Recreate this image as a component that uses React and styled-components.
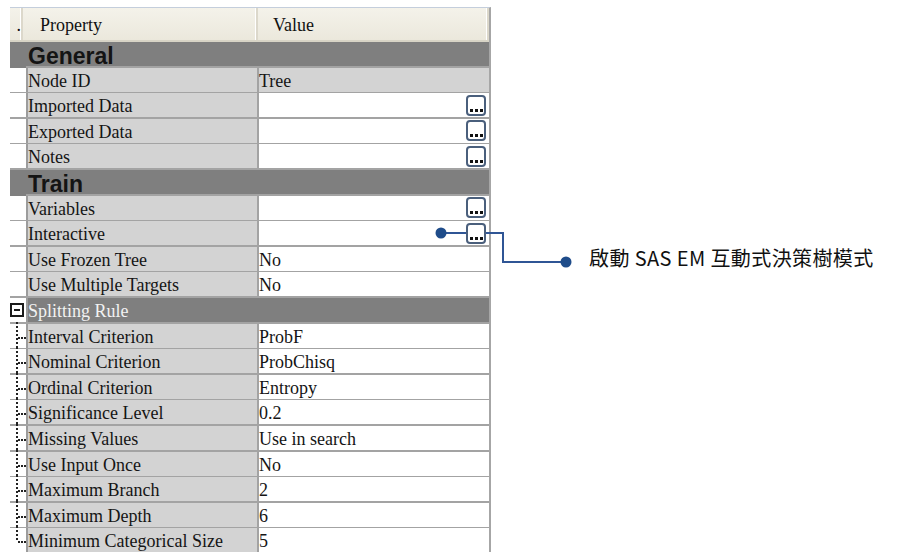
import React from "react";
import styled, { createGlobalStyle } from "styled-components";

const GlobalStyle = createGlobalStyle`
  html, body {
    margin: 0;
    padding: 0;
    background: #ffffff;
  }
  body {
    font-family: "Liberation Serif", "Times New Roman", serif;
  }
`;

const ROW_H = 25.6;

const Page = styled.div`
  position: relative;
  width: 900px;
  height: 552px;
  overflow: hidden;
  padding: 7px 0 0 10px;
  box-sizing: border-box;
`;

const Sheet = styled.div`
  width: 479px;
  border-top: 1px solid #c4cedc;
  border-right: 2px solid #a6a6a6;
`;

const HeaderRow = styled.div`
  display: grid;
  grid-template-columns: 13px 235px 1fr;
  height: 34px;
  background: linear-gradient(#f4f2ea, #ebe8dc);
  border-bottom: 2px solid #d8d4c6;
  box-sizing: border-box;
`;

const HeaderCell = styled.div`
  display: flex;
  align-items: center;
  justify-content: ${(p) => (p.$end ? "flex-end" : "flex-start")};
  padding-left: ${(p) => p.$pad || 0}px;
  padding-top: 2px;
  font-size: 18px;
  color: #111;
  border-right: 2px solid #dcd8cb;
  box-shadow: inset -1px 0 0 #ffffff;
  box-sizing: border-box;
`;

const Row = styled.div`
  display: grid;
  grid-template-columns: 16px 231px 1fr;
  height: ${ROW_H}px;
  box-sizing: border-box;
  border-bottom: 2px solid #a3a3a3;
  background: ${(p) => (p.$group ? "#7f7f7f" : "transparent")};
`;

const Gutter = styled.div`
  position: relative;
  background: ${(p) => (p.$group ? "#7f7f7f" : "#ffffff")};
  display: flex;
  align-items: center;

  ${(p) =>
    p.$branch &&
    `
    &::before {
      content: "";
      position: absolute;
      left: 6px;
      top: -2px;
      height: ${p.$branch === "last" ? "calc(50% + 2px)" : "calc(100% + 2px)"};
      border-left: 2px dotted #222;
    }
    &::after {
      content: "";
      position: absolute;
      left: 8px;
      right: 0;
      top: calc(50% + 1px);
      border-top: 2px dotted #222;
    }
  `}
`;

const Toggle = styled.div`
  width: 10px;
  height: 10px;
  border: 2px solid #1a1a1a;
  background: #ffffff;
  position: relative;

  &::after {
    content: "";
    position: absolute;
    left: 2px;
    right: 2px;
    top: 4px;
    border-top: 2px solid #1a1a1a;
  }
`;

const GroupTitle = styled.div`
  grid-column: 2 / 4;
  display: flex;
  align-items: center;
  padding-left: 2px;
  padding-top: 1px;
  font-family: "Liberation Sans", Arial, sans-serif;
  font-weight: bold;
  font-size: 23px;
  color: #141414;
`;

const Name = styled.div`
  display: flex;
  align-items: center;
  padding-top: 3px;
  font-size: 18px;
  white-space: nowrap;
  color: ${(p) => (p.$sub ? "#f2f2f2" : "#151515")};
  background: ${(p) => (p.$sub ? "#7f7f7f" : "#d3d3d3")};
  border-left: 2px solid #9c9c9c;
`;

const Value = styled.div`
  display: flex;
  align-items: center;
  justify-content: space-between;
  font-size: 18px;
  color: #151515;
  white-space: nowrap;
  background: ${(p) =>
    p.$sub ? "#7f7f7f" : p.$readonly ? "#d3d3d3" : "#ffffff"};
  border-left: ${(p) => (p.$sub ? "0" : "2px solid #a3a3a3")};
  padding-right: 3px;

  & > span {
    padding-top: 3px;
  }
`;

const DotsButton = styled.div`
  position: relative;
  z-index: 2;
  width: 16px;
  height: 15px;
  border: 2px solid #4a5f7c;
  border-radius: 4px;
  background: #ffffff;
  display: flex;
  align-items: flex-end;
  justify-content: center;
  gap: 2px;
  padding-bottom: 2px;
  box-sizing: content-box;
`;

const Dot = styled.span`
  width: 3px;
  height: 3px;
  background: #111;
`;

const Connector = styled.svg`
  position: absolute;
  left: 0;
  top: 0;
  z-index: 1;
  pointer-events: none;
`;

const CalloutText = styled.div`
  position: absolute;
  left: 589px;
  top: 243px;
  font-family: "Noto Sans CJK TC", "Noto Sans", sans-serif;
  font-size: 20px;
  letter-spacing: 0.4px;
  color: #111;
  white-space: nowrap;
`;

const rows = [
  { group: "General" },
  { name: "Node ID", value: "Tree", readonly: true },
  { name: "Imported Data", button: true },
  { name: "Exported Data", button: true },
  { name: "Notes", button: true },
  { group: "Train" },
  { name: "Variables", button: true },
  { name: "Interactive", button: true },
  { name: "Use Frozen Tree", value: "No" },
  { name: "Use Multiple Targets", value: "No" },
  { sub: "Splitting Rule" },
  { name: "Interval Criterion", value: "ProbF", branch: "mid" },
  { name: "Nominal Criterion", value: "ProbChisq", branch: "mid" },
  { name: "Ordinal Criterion", value: "Entropy", branch: "mid" },
  { name: "Significance Level", value: "0.2", branch: "mid" },
  { name: "Missing Values", value: "Use in search", branch: "mid" },
  { name: "Use Input Once", value: "No", branch: "mid" },
  { name: "Maximum Branch", value: "2", branch: "mid" },
  { name: "Maximum Depth", value: "6", branch: "mid" },
  { name: "Minimum Categorical Size", value: "5", branch: "last" },
];

function Ellipsis() {
  return (
    <DotsButton>
      <Dot />
      <Dot />
      <Dot />
    </DotsButton>
  );
}

function PropertyRow({ row }) {
  if (row.group) {
    return (
      <Row $group>
        <Gutter $group />
        <GroupTitle>{row.group}</GroupTitle>
      </Row>
    );
  }
  if (row.sub) {
    return (
      <Row>
        <Gutter>
          <Toggle />
        </Gutter>
        <Name $sub>{row.sub}</Name>
        <Value $sub />
      </Row>
    );
  }
  return (
    <Row>
      <Gutter $branch={row.branch} />
      <Name>{row.name}</Name>
      <Value $readonly={row.readonly}>
        <span>{row.value}</span>
        {row.button && <Ellipsis />}
      </Value>
    </Row>
  );
}

export default function App() {
  return (
    <Page>
      <GlobalStyle />
      <Sheet>
        <HeaderRow>
          <HeaderCell $end>.</HeaderCell>
          <HeaderCell $pad={17}>Property</HeaderCell>
          <HeaderCell $pad={15}>Value</HeaderCell>
        </HeaderRow>
        {rows.map((r, i) => (
          <PropertyRow key={i} row={r} />
        ))}
      </Sheet>
      <Connector width="900" height="552" viewBox="0 0 900 552">
        <path
          d="M441 233 H503 V262 H566"
          fill="none"
          stroke="#2f5595"
          strokeWidth="2"
        />
        <circle cx="441" cy="233" r="5.5" fill="#1f4c8a" />
        <circle cx="566" cy="262" r="5.5" fill="#1f4c8a" />
      </Connector>
      <CalloutText>啟動 SAS EM 互動式決策樹模式</CalloutText>
    </Page>
  );
}
